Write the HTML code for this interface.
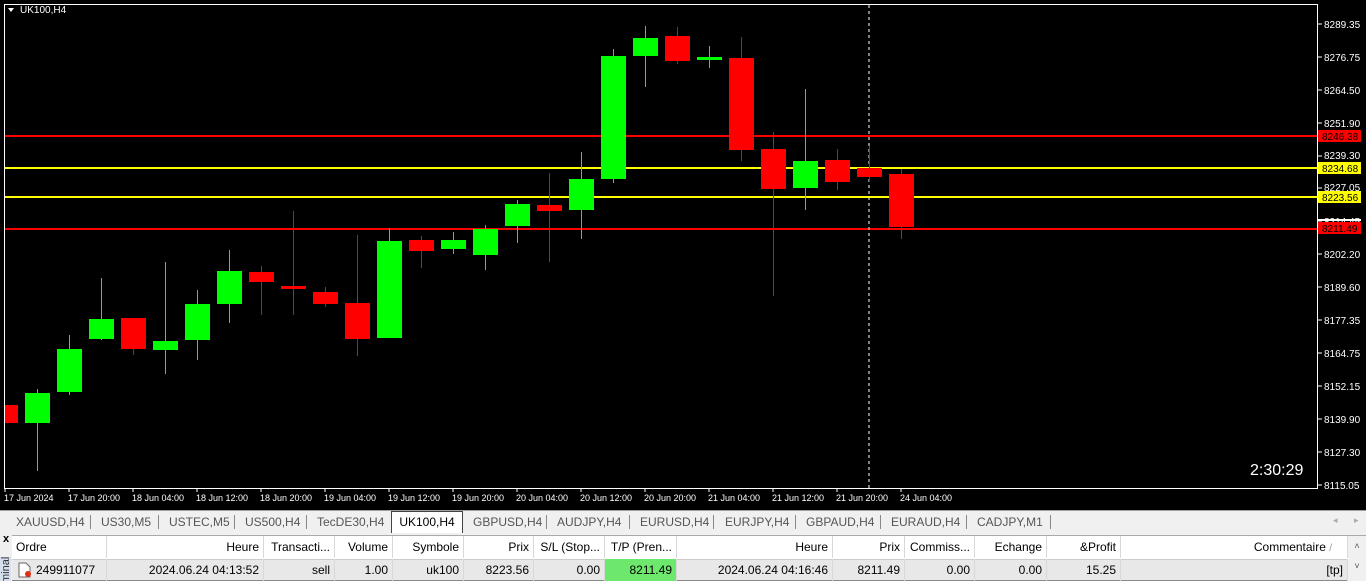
<!DOCTYPE html>
<html><head><meta charset="utf-8"><style>
body{margin:0;width:1366px;height:581px;overflow:hidden;background:#f0f0f0;font-family:"Liberation Sans",sans-serif;position:relative}
.ax{font-family:"Liberation Sans",sans-serif;font-size:10px;fill:#fff}
#tabs{position:absolute;left:0;top:510px;width:1366px;height:22px;background:#f0f0f0;border-top:1px solid #a0a0a0;font-size:12px;color:#555}
#tabs span{position:absolute;top:4px}
#tabs .sep{width:1px;height:14px;background:#888;top:4px}
#tbl{position:absolute;left:12px;top:535px;width:1354px;height:46px;background:#fff}
.c{position:absolute;font-size:12px;color:#000;height:22px;line-height:22px;box-sizing:border-box;padding:0 4px;border-right:1px solid #d8d8d8;white-space:nowrap;overflow:hidden}
</style></head><body>
<svg width="1366" height="510" style="position:absolute;left:0;top:0" xmlns="http://www.w3.org/2000/svg">
<rect width="1366" height="510" fill="#000"/>
<rect x="4.5" y="4.5" width="1313" height="484" fill="none" stroke="#fff"/>
<path d="M8 8h6l-3 4z" fill="#fff"/>
<text x="20" y="13" class="ax" font-size="9">UK100,H4</text>
<g id="lines">
<rect x="5" y="135" width="1312" height="2" fill="#f00"/>
<rect x="5" y="167" width="1312" height="2" fill="#ff0"/>
<rect x="5" y="196" width="1312" height="2" fill="#ff0"/>
<rect x="5" y="228" width="1312" height="2" fill="#f00"/>
</g>
<line x1="869" y1="5" x2="869" y2="488" stroke="#fff" stroke-dasharray="3,3"/>
<g>
<rect x="5" y="405" width="13" height="18" fill="#f00"/>
<g fill="#0f0">
<rect x="37" y="389" width="1" height="82"/><rect x="25" y="393" width="25" height="30"/>
<rect x="69" y="335" width="1" height="60"/><rect x="57" y="349" width="25" height="43"/>
<rect x="101" y="278" width="1" height="62"/><rect x="89" y="319" width="25" height="20"/>
<rect x="165" y="262" width="1" height="112"/><rect x="153" y="341" width="25" height="9"/>
<rect x="197" y="290" width="1" height="70"/><rect x="185" y="304" width="25" height="36"/>
<rect x="229" y="250" width="1" height="73"/><rect x="217" y="271" width="25" height="33"/>
<rect x="389" y="228" width="1" height="110"/><rect x="377" y="241" width="25" height="97"/>
<rect x="453" y="232" width="1" height="22"/><rect x="441" y="240" width="25" height="9"/>
<rect x="485" y="225" width="1" height="45"/><rect x="473" y="229" width="25" height="26"/>
<rect x="517" y="200" width="1" height="43"/><rect x="505" y="204" width="25" height="22"/>
<rect x="581" y="152" width="1" height="87"/><rect x="569" y="179" width="25" height="31"/>
<rect x="613" y="49" width="1" height="134"/><rect x="601" y="56" width="25" height="123"/>
<rect x="645" y="26" width="1" height="61"/><rect x="633" y="38" width="25" height="18"/>
<rect x="709" y="46" width="1" height="22"/><rect x="697" y="57" width="25" height="3"/>
<rect x="805" y="89" width="1" height="121"/><rect x="793" y="161" width="25" height="27"/>
</g>
<g fill="#f00">
<rect x="133" y="318" width="1" height="37"/><rect x="121" y="318" width="25" height="31"/>
<rect x="261" y="266" width="1" height="49"/><rect x="249" y="272" width="25" height="10"/>
<rect x="293" y="211" width="1" height="104"/><rect x="281" y="286" width="25" height="3"/>
<rect x="325" y="287" width="1" height="20"/><rect x="313" y="292" width="25" height="12"/>
<rect x="357" y="235" width="1" height="121"/><rect x="345" y="303" width="25" height="36"/>
<rect x="421" y="236" width="1" height="32"/><rect x="409" y="240" width="25" height="11"/>
<rect x="549" y="173" width="1" height="89"/><rect x="537" y="205" width="25" height="6"/>
<rect x="677" y="27" width="1" height="37"/><rect x="665" y="36" width="25" height="25"/>
<rect x="741" y="37" width="1" height="124"/><rect x="729" y="58" width="25" height="92"/>
<rect x="773" y="132" width="1" height="164"/><rect x="761" y="149" width="25" height="40"/>
<rect x="837" y="149" width="1" height="41"/><rect x="825" y="160" width="25" height="22"/>
<rect x="869" y="146" width="1" height="36"/><rect x="857" y="168" width="25" height="9"/>
<rect x="901" y="169" width="1" height="70"/><rect x="889" y="174" width="25" height="53"/>
</g>
</g>
<g stroke="#fff">
<line x1="1318" y1="24" x2="1322" y2="24"/><line x1="1318" y1="57" x2="1322" y2="57"/><line x1="1318" y1="90" x2="1322" y2="90"/><line x1="1318" y1="123" x2="1322" y2="123"/><line x1="1318" y1="156" x2="1322" y2="156"/><line x1="1318" y1="188" x2="1322" y2="188"/><line x1="1318" y1="221" x2="1322" y2="221"/><line x1="1318" y1="254" x2="1322" y2="254"/><line x1="1318" y1="287" x2="1322" y2="287"/><line x1="1318" y1="320" x2="1322" y2="320"/><line x1="1318" y1="353" x2="1322" y2="353"/><line x1="1318" y1="386" x2="1322" y2="386"/><line x1="1318" y1="419" x2="1322" y2="419"/><line x1="1318" y1="452" x2="1322" y2="452"/><line x1="1318" y1="485" x2="1322" y2="485"/>
</g>
<g class="ax" font-size="10">
<text x="1324" y="28">8289.35</text><text x="1324" y="61">8276.75</text><text x="1324" y="94">8264.50</text><text x="1324" y="127">8251.90</text><text x="1324" y="159">8239.30</text><text x="1324" y="191">8227.05</text><text x="1324" y="225">8214.45</text><text x="1324" y="258">8202.20</text><text x="1324" y="291">8189.60</text><text x="1324" y="324">8177.35</text><text x="1324" y="357">8164.75</text><text x="1324" y="390">8152.15</text><text x="1324" y="423">8139.90</text><text x="1324" y="456">8127.30</text><text x="1324" y="489">8115.05</text>
</g>
<rect x="1318" y="130" width="43" height="12" fill="#f00"/><text x="1322" y="140" font-size="10" font-family="Liberation Sans" fill="#000">8246.38</text>
<rect x="1318" y="162" width="43" height="12" fill="#ff0"/><text x="1322" y="172" font-size="10" font-family="Liberation Sans" fill="#000">8234.68</text>
<rect x="1318" y="191" width="43" height="12" fill="#ff0"/><text x="1322" y="201" font-size="10" font-family="Liberation Sans" fill="#000">8223.56</text>
<rect x="1318" y="222" width="43" height="12" fill="#f00"/><text x="1322" y="232" font-size="10" font-family="Liberation Sans" fill="#000">8211.49</text>
<rect x="1318" y="219" width="43" height="2" fill="#fff"/>
<text x="1250" y="475" font-size="16" font-family="Liberation Sans" fill="#fff">2:30:29</text>
<g stroke="#fff"><line x1="5" y1="489" x2="5" y2="493"/><line x1="69" y1="489" x2="69" y2="493"/><line x1="133" y1="489" x2="133" y2="493"/><line x1="197" y1="489" x2="197" y2="493"/><line x1="261" y1="489" x2="261" y2="493"/><line x1="325" y1="489" x2="325" y2="493"/><line x1="389" y1="489" x2="389" y2="493"/><line x1="453" y1="489" x2="453" y2="493"/><line x1="517" y1="489" x2="517" y2="493"/><line x1="581" y1="489" x2="581" y2="493"/><line x1="645" y1="489" x2="645" y2="493"/><line x1="709" y1="489" x2="709" y2="493"/><line x1="773" y1="489" x2="773" y2="493"/><line x1="837" y1="489" x2="837" y2="493"/><line x1="901" y1="489" x2="901" y2="493"/></g>
</svg>
<svg width="1366" height="10" style="position:absolute;left:0;top:492px"><rect width="1366" height="10" fill="#000"/>
<g font-family="Liberation Sans" font-size="9" fill="#fff"><text x="4" y="9">17 Jun 2024</text><text x="68" y="9">17 Jun 20:00</text><text x="132" y="9">18 Jun 04:00</text><text x="196" y="9">18 Jun 12:00</text><text x="260" y="9">18 Jun 20:00</text><text x="324" y="9">19 Jun 04:00</text><text x="388" y="9">19 Jun 12:00</text><text x="452" y="9">19 Jun 20:00</text><text x="516" y="9">20 Jun 04:00</text><text x="580" y="9">20 Jun 12:00</text><text x="644" y="9">20 Jun 20:00</text><text x="708" y="9">21 Jun 04:00</text><text x="772" y="9">21 Jun 12:00</text><text x="836" y="9">21 Jun 20:00</text><text x="900" y="9">24 Jun 04:00</text></g></svg>
<div id="tabs">
<span style="left:16px">XAUUSD,H4</span><span class="sep" style="left:90px"></span>
<span style="left:101px">US30,M5</span><span class="sep" style="left:158px"></span>
<span style="left:169px">USTEC,M5</span><span class="sep" style="left:234px"></span>
<span style="left:245px">US500,H4</span><span class="sep" style="left:306px"></span>
<span style="left:317px">TecDE30,H4</span>
<span style="left:391px;top:0;height:21px;width:70px;background:#fff;border:1px solid #444;border-bottom:none;color:#000;line-height:21px;text-align:center">UK100,H4</span>
<span style="left:473px">GBPUSD,H4</span><span class="sep" style="left:546px"></span>
<span style="left:557px">AUDJPY,H4</span><span class="sep" style="left:629px"></span>
<span style="left:640px">EURUSD,H4</span><span class="sep" style="left:713px"></span>
<span style="left:725px">EURJPY,H4</span><span class="sep" style="left:795px"></span>
<span style="left:806px">GBPAUD,H4</span><span class="sep" style="left:880px"></span>
<span style="left:891px">EURAUD,H4</span><span class="sep" style="left:966px"></span>
<span style="left:977px">CADJPY,M1</span><span class="sep" style="left:1050px"></span>
<span style="left:1333px;font-size:9px;color:#aaa">◂</span><span style="left:1354px;font-size:9px;color:#aaa">▸</span>
</div>
<div style="position:absolute;left:0;top:533px;width:12px;height:48px;background:#f0f0f0"></div>
<div style="position:absolute;left:3px;top:533px;font-size:11px;font-weight:bold">x</div>
<div style="position:absolute;left:0;top:557px;width:11px;height:24px;background:#d5dfee;overflow:hidden"><div style="transform:rotate(-90deg);transform-origin:0 0;position:absolute;left:0;top:26px;font-size:11px;color:#333">minal</div></div>
<div id="tbl">
<div style="position:absolute;left:0;top:0;width:1354px;height:1px;background:#aaa"></div>
<div class="c" style="left:0;top:1px;width:95px">Ordre</div>
<div class="c" style="left:95px;top:1px;width:157px;text-align:right">Heure</div>
<div class="c" style="left:252px;top:1px;width:71px;text-align:right">Transacti...</div>
<div class="c" style="left:323px;top:1px;width:58px;text-align:right">Volume</div>
<div class="c" style="left:381px;top:1px;width:71px;text-align:right">Symbole</div>
<div class="c" style="left:452px;top:1px;width:70px;text-align:right">Prix</div>
<div class="c" style="left:522px;top:1px;width:71px;text-align:right">S/L (Stop...</div>
<div class="c" style="left:593px;top:1px;width:72px;text-align:right">T/P (Pren...</div>
<div class="c" style="left:665px;top:1px;width:156px;text-align:right">Heure</div>
<div class="c" style="left:821px;top:1px;width:72px;text-align:right">Prix</div>
<div class="c" style="left:893px;top:1px;width:70px;text-align:right">Commiss...</div>
<div class="c" style="left:963px;top:1px;width:72px;text-align:right">Echange</div>
<div class="c" style="left:1035px;top:1px;width:74px;text-align:right">&amp;Profit</div>
<div class="c" style="left:1109px;top:1px;width:227px;text-align:right;padding-right:15px">Commentaire <span style="color:#999;font-size:10px">/</span></div>
<div style="position:absolute;left:0;top:24px;width:1336px;height:20px;background:#e8e8e8;border-top:1px solid #ccc;border-bottom:1px solid #888"></div>
<div class="c" style="left:0;top:24px;width:95px;padding-left:24px">249911077</div>
<svg style="position:absolute;left:6px;top:27px" width="14" height="16"><path d="M1 1h7l4 4v10H1z" fill="#fff" stroke="#666"/><circle cx="10" cy="12" r="3" fill="#e03010"/></svg>
<div class="c" style="left:95px;top:24px;width:157px;text-align:right">2024.06.24 04:13:52</div>
<div class="c" style="left:252px;top:24px;width:71px;text-align:right">sell</div>
<div class="c" style="left:323px;top:24px;width:58px;text-align:right">1.00</div>
<div class="c" style="left:381px;top:24px;width:71px;text-align:right">uk100</div>
<div class="c" style="left:452px;top:24px;width:70px;text-align:right">8223.56</div>
<div class="c" style="left:522px;top:24px;width:71px;text-align:right">0.00</div>
<div class="c" style="left:593px;top:24px;width:72px;text-align:right;background:#6de86d">8211.49</div>
<div class="c" style="left:665px;top:24px;width:156px;text-align:right">2024.06.24 04:16:46</div>
<div class="c" style="left:821px;top:24px;width:72px;text-align:right">8211.49</div>
<div class="c" style="left:893px;top:24px;width:70px;text-align:right">0.00</div>
<div class="c" style="left:963px;top:24px;width:72px;text-align:right">0.00</div>
<div class="c" style="left:1035px;top:24px;width:74px;text-align:right">15.25</div>
<div class="c" style="left:1109px;top:24px;width:227px;text-align:right">[tp]</div>
<div style="position:absolute;left:1336px;top:1px;width:18px;height:45px;background:#f0f0f0;font-size:9px;color:#555;text-align:center;line-height:20px">˄<br>˅</div>
</div>
</body></html>
